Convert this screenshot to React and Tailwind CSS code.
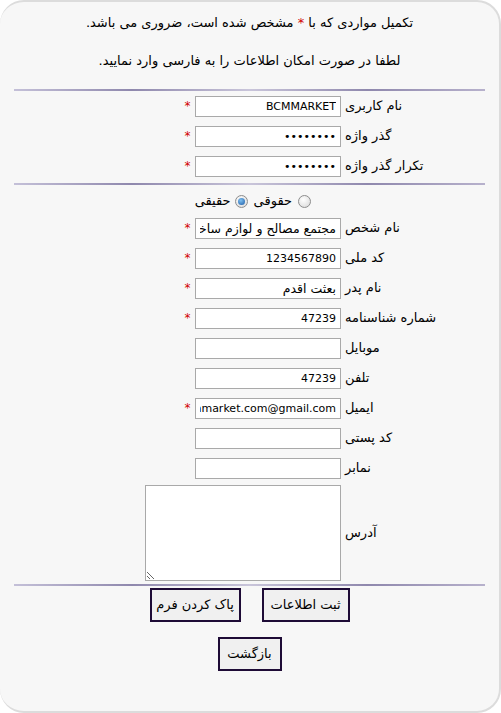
import React from 'react';

const font = { fontFamily: '"DejaVu Sans", Tahoma, sans-serif' };

function Rule({ className = '' }) {
  return (
    <div
      className={`mx-[14px] h-[2px] bg-[linear-gradient(to_right,#c4c0d8,#8f88ad_25%,#c9c5da_50%,#8f88ad_75%,#b7b1cc)] ${className}`}
    />
  );
}

function Star({ show }) {
  return (
    <span className="flex h-full w-[15px] items-start justify-center pt-[9px] text-[12px] leading-none text-[#d10000]">
      {show ? '*' : ''}
    </span>
  );
}

function Row({ label, value = '', type = 'text', required, fa }) {
  return (
    <div className="flex h-[30px] items-center pr-[48px]">
      <label className="w-[110px] whitespace-nowrap pl-[4px] text-left text-[13px] text-black">{label}</label>
      <input
        type={type}
        defaultValue={value}
        readOnly
        className={`h-[21px] w-[146px] border border-[#a9a9a9] bg-white px-[4px] text-black outline-none ${fa ? 'text-[12.5px]' : 'text-[11px]'}`}
        style={font}
      />
      <Star show={required} />
    </div>
  );
}

function Radio({ checked }) {
  return (
    <span className="flex h-[13px] w-[13px] items-center justify-center rounded-full border border-[#8d8d8d] bg-[radial-gradient(circle_at_40%_35%,#ffffff,#d6d6d6)]">
      {checked ? (
        <span className="h-[7px] w-[7px] rounded-full bg-[radial-gradient(circle_at_40%_35%,#7fc0f0,#1b5aa6)]" />
      ) : null}
    </span>
  );
}

function Btn({ children, className = '' }) {
  return (
    <button
      className={`h-[34px] whitespace-nowrap border-2 border-[#1e0b36] bg-[#f0f0f0] px-0 text-[13px] text-black ${className}`}
      style={font}
    >
      {children}
    </button>
  );
}

export default function App() {
  return (
    <div dir="rtl" className="h-[713px] w-[501px] overflow-hidden bg-white" style={font}>
      <div className="flex h-full flex-col rounded-[24px] border-y-2 border-r-2 border-[#dcdcdc] bg-[#f7f7f7]">
        <p className="pt-[11px] text-center text-[13px] leading-[20px] text-black">
          تکمیل مواردی که با <span className="text-[#d10000]">*</span> مشخص شده است، ضروری می باشد.
        </p>
        <p className="mt-[18px] text-center text-[13px] leading-[20px] text-black">
          لطفا در صورت امکان اطلاعات را به فارسی وارد نمایید.
        </p>
        <Rule className="mt-[18px]" />

        <Row label="نام کاربری" value="BCMMARKET" required />
        <Row label="گذر واژه" type="password" value="12345678" required />
        <Row label="تکرار گذر واژه" type="password" value="12345678" required />

        <Rule className="mt-[2px]" />

        <div className="flex h-[28px] items-center pr-[188px] pt-[4px] text-[13px] text-black">
          <Radio />
          <span className="mr-[6px]">حقوقی</span>
          <span className="mr-[6px]">
            <Radio checked />
          </span>
          <span className="mr-[4px]">حقیقی</span>
        </div>

        <Row label="نام شخص" value="مجتمع مصالح و لوازم ساختمانی" required fa />
        <Row label="کد ملی" value="1234567890" required />
        <Row label="نام پدر" value="بعثت اقدم" required fa />
        <Row label="شماره شناسنامه" value="47239" required />
        <Row label="موبایل" />
        <Row label="تلفن" value="47239" />
        <Row label="ایمیل" value="bcmmarket.com@gmail.com" required />
        <Row label="کد پستی" />
        <Row label="نمابر" />

        <div className="flex items-center pr-[48px] pt-[2px]">
          <label className="w-[110px] pl-[4px] text-left text-[13px] text-black">آدرس</label>
          <textarea readOnly className="h-[96px] w-[196px] border border-[#a9a9a9] bg-white outline-none" />
        </div>

        <Rule className="mt-[3px]" />

        <div className="mt-[2px] flex justify-center gap-[21px]">
          <Btn className="w-[88px]">ثبت اطلاعات</Btn>
          <Btn className="w-[91px]">پاک کردن فرم</Btn>
        </div>
        <div className="mt-[15px] flex justify-center">
          <Btn className="w-[64px]">بازگشت</Btn>
        </div>
      </div>
    </div>
  );
}
